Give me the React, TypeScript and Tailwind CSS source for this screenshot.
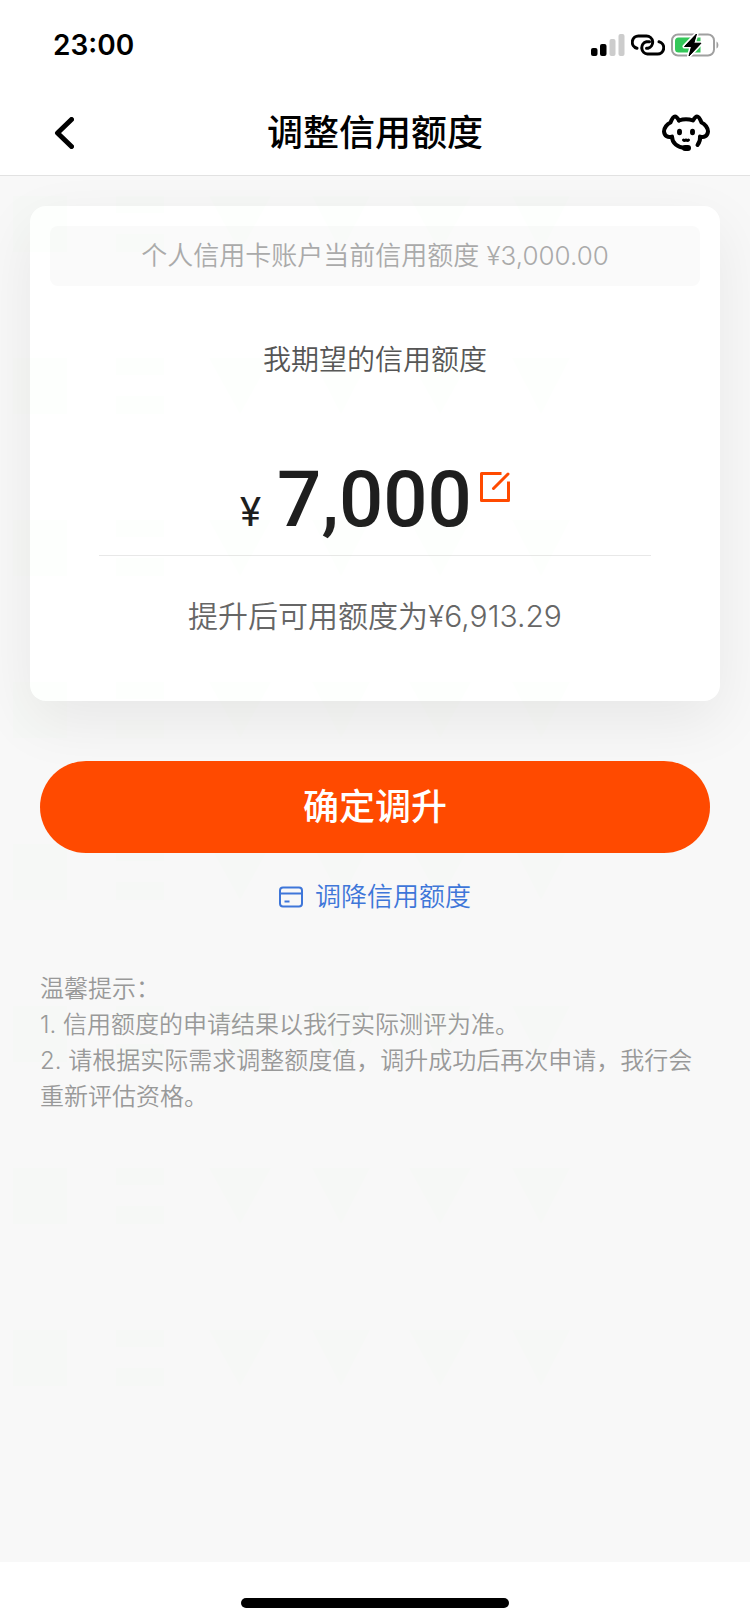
import { useId } from "react";

const TIPS = [
    "1. 信用额度的申请结果以我行实际测评为准。",
    "2. 请根据实际需求调整额度值，调升成功后再次申请，我行会重新评估资格。",
];

function SignalIcon() {
    return (
        <svg width="34" height="22" viewBox="0 0 34 22" aria-hidden="true">
            <rect x="0" y="14" width="6.500" height="8" rx="2" fill="#000" />
            <rect x="9" y="10" width="6.500" height="12" rx="2" fill="#000" />
            <rect x="18.500" y="5" width="6" height="17" rx="2" fill="#ccc" />
            <rect x="27.500" y="0" width="6" height="22" rx="2" fill="#ccc" />
        </svg>
    );
}

function HotspotIcon() {
    return (
        <svg
            width="34"
            height="22"
            viewBox="0 0 34 22"
            fill="none"
            stroke="#000"
            strokeWidth="3"
            strokeLinecap="round"
            aria-hidden="true"
        >
            <path d="M6 14.200A6.200 6.200 0 0 1 8 2H15.500A6.200 6.200 0 0 1 17 14.200H15.500" />
            <path d="M28 7.800A6.200 6.200 0 0 1 26 20H16.500A6.200 6.200 0 0 1 15.500 7.800H18.500" />
        </svg>
    );
}

function BatteryIcon() {
    return (
        <svg width="49" height="24" viewBox="0 0 49 24" aria-hidden="true">
            <rect x="1" y="1.500" width="42" height="21" rx="6" fill="none" stroke="#a0a0a0" strokeWidth="2" />
            <path d="M45.500 8.500C48 9.500 48 14.500 45.500 15.500Z" fill="#a0a0a0" />
            <path d="M7.500 4.500H29.500V19.500H7.500A3.500 3.500 0 0 1 4 16V8A3.500 3.500 0 0 1 7.500 4.500Z" fill="#34c759" />
            <path
                d="M25.500 1 13.500 13.500H20.500L18 23 30 10.200H22.800Z"
                fill="#000"
                stroke="#fff"
                strokeWidth="4"
                strokeLinejoin="round"
                paintOrder="stroke"
            />
            <path d="M25.500 1 13.500 13.500H20.500L18 23 30 10.200H22.800Z" stroke="#000" strokeLinejoin="round" />
        </svg>
    );
}

function BackIcon() {
    return (
        <svg
            width="20"
            height="32"
            viewBox="0 0 20 32"
            fill="none"
            stroke="#000"
            strokeWidth="5"
            strokeLinecap="round"
            strokeLinejoin="round"
            aria-hidden="true"
        >
            <path d="M17.500 2.500 3.500 16 17.500 29.500" />
        </svg>
    );
}

// Puppy wearing a headset, the way into customer service.
function PuppyIcon() {
    return (
        <svg width="48" height="38" viewBox="0 0 48 38" fill="none" aria-hidden="true">
            <g stroke="#000" strokeWidth="4" strokeLinecap="round" strokeLinejoin="round">
                <path d="M17 6.500C21 5 27 5 31 6.500C32.500 4 33.500 2.500 35 2.500C37 2.500 38.500 6 39.500 8.500C43 10 46 14 46 17.500C45.500 22 42 24 38 22.500C38.500 26 37.500 28.500 35.500 31" />
                <path d="M17 6.500C15.500 4 14.500 2.500 13 2.500C11 2.500 9.500 6 8.500 8.500C5 10 2 14 2 17.500C2.500 22 6 24 10 22.500C10 29 15.500 33.500 23 34" />
            </g>
            <rect x="20" y="31" width="9" height="6" rx="3" fill="#000" />
            <ellipse cx="17.500" cy="18" rx="2.500" ry="3.200" fill="#000" />
            <ellipse cx="30.500" cy="18" rx="2.500" ry="3.200" fill="#000" />
            <path d="M21.500 26C22.500 27 23.500 26 24 26C24.500 26 25.500 27 26.500 26" stroke="#000" strokeWidth="3" strokeLinecap="round" />
        </svg>
    );
}

function EditIcon() {
    return (
        <svg
            width="30"
            height="30"
            viewBox="0 0 30 30"
            fill="none"
            stroke="#ff4a00"
            strokeWidth="3"
            strokeLinejoin="round"
            aria-hidden="true"
        >
            <path d="M21.500 1.500H1.500V28.500H28.500V9.500" />
            <path d="M28 2 13.500 16.500" strokeLinecap="round" />
        </svg>
    );
}

function CardIcon() {
    return (
        <svg width="24" height="22" viewBox="0 0 24 22" fill="none" stroke="#3e76d9" strokeWidth="2" aria-hidden="true">
            <rect x="1" y="1.500" width="22" height="19" rx="3" />
            <path d="M1 7.500H23M5.500 15.500H10.500" />
        </svg>
    );
}

// Barely visible shapes repeated down the content area.
function Watermark() {
    const id = useId();
    return (
        <svg className="pointer-events-none absolute inset-x-0 top-5 h-[1200px] w-full" aria-hidden="true">
            <defs>
                <pattern id={id} width="750" height="162" patternUnits="userSpaceOnUse">
                    <path
                        fill="#a8f898"
                        d="M13 0H67V56H13ZM116 0H164V17H116ZM116 38H164V56H116ZM209 0H271L240 56ZM312 0H370L341 56ZM409 0H471L440 56ZM512 0H570L541 56Z"
                    />
                </pattern>
            </defs>
            <rect width="100%" height="100%" fill={`url(#${id})`} opacity="0.02" />
        </svg>
    );
}

function StatusBar() {
    return (
        <div className="flex h-[90px] items-center justify-between pr-[30px] pl-[53px]">
            <span className="text-[28px] leading-9 font-semibold">23:00</span>
            <div className="flex items-center gap-[6px]">
                <SignalIcon />
                <HotspotIcon />
                <BatteryIcon />
            </div>
        </div>
    );
}

function NavBar() {
    return (
        <div className="flex h-[86px] items-center justify-between border-b border-[#e2e2e2] px-10">
            <button type="button" aria-label="返回" className="flex w-12 pl-[14px]">
                <BackIcon />
            </button>
            <h1 className="text-4xl font-medium">调整信用额度</h1>
            <button type="button" aria-label="客服" className="flex w-12">
                <PuppyIcon />
            </button>
        </div>
    );
}

function QuotaCard() {
    return (
        <section className="mx-[30px] flex flex-col items-center rounded-2xl bg-white px-5 pt-5 pb-[65px] shadow-[0_20px_60px_rgba(0,0,0,0.07)]">
            <p className="w-full rounded-lg bg-[#fafafa] text-center text-[26px] leading-[60px] text-[#aaa]">
                个人信用卡账户当前信用额度 ¥3,000.00
            </p>
            <h2 className="mt-[54px] text-[28px] leading-10 text-[#555]">我期望的信用额度</h2>
            <div className="mt-[74px] flex h-[102px] w-[85%] justify-center border-b border-[#e8e8e8] font-['Roboto',sans-serif] text-[#1e1e1e]">
                <div className="flex items-baseline gap-4">
                    <span className="text-[40px] font-normal">¥</span>
                    <span className="text-[78px] leading-[92px] font-medium">7,000</span>
                </div>
                <button type="button" aria-label="修改额度" className="ml-2 self-start pt-[18px]">
                    <EditIcon />
                </button>
            </div>
            <p className="mt-10 text-3xl leading-10 text-[#666]">提升后可用额度为¥6,913.29</p>
        </section>
    );
}

export default function App() {
    return (
        <div className="flex min-h-screen flex-col bg-white font-['Inter','Noto_Sans_CJK_SC',sans-serif] font-[350] text-black">
            <header>
                <StatusBar />
                <NavBar />
            </header>

            <main className="relative flex-1 overflow-hidden bg-[#f8f8f8] pt-[30px]">
                <QuotaCard />
                <div className="flex flex-col items-center px-10 pt-[60px]">
                    <button
                        type="button"
                        className="relative z-10 h-[92px] w-full rounded-full bg-[#ff4a00] text-4xl font-medium text-white"
                    >
                        确定调升
                    </button>
                    <a href="#lower" className="mt-6 flex items-center gap-3 text-[26px] leading-10 text-[#3e76d9]">
                        <CardIcon />
                        调降信用额度
                    </a>
                </div>
                <div className="mt-[54px] px-10 text-2xl leading-9 text-[#999]">
                    <p>温馨提示：</p>
                    {TIPS.map((tip) => (
                        <p key={tip}>{tip}</p>
                    ))}
                </div>
                <Watermark />
            </main>

            <footer className="flex h-[62px] justify-center pt-9">
                <div className="h-[10px] w-[268px] rounded-full bg-black" />
            </footer>
        </div>
    );
}
